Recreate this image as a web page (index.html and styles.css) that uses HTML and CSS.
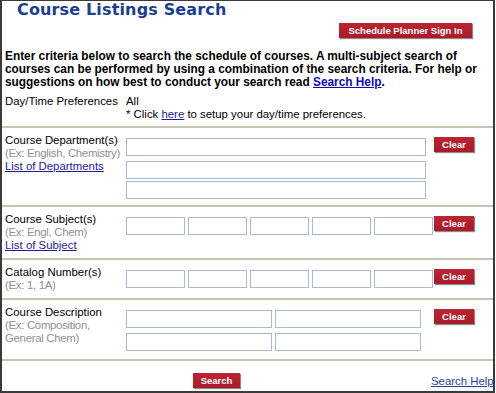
FILE: index.html
```html
<!DOCTYPE html>
<html>
<head>
<meta charset="utf-8">
<title>Course Listings Search</title>
<link rel="stylesheet" href="styles.css">
</head>
<body>
<div class="frame">
  <header class="top">
    <h1 class="title">Course Listings Search</h1>
    <div class="signin-row"><button class="btn btn-signin" type="button">Schedule Planner Sign In</button></div>
    <p class="intro">Enter criteria below to search the schedule of courses. A multi-subject search of courses can be performed by using a combination of the search criteria. For help or suggestions on how best to conduct your search read <a href="#">Search Help</a>.</p>
    <div class="prefs">
      <div class="label-main">Day/Time Preferences</div>
      <div>All<br>* Click <a class="link" href="#">here</a> to setup your day/time preferences.</div>
    </div>
  </header>

  <section class="section">
    <div class="labels">
      <div class="label-main">Course Department(s)</div>
      <div class="label-ex">(Ex: English, Chemistry)</div>
      <a class="link" href="#">List of Departments</a>
    </div>
    <div class="field-stack">
      <input class="input input-wide input-first" type="text">
      <input class="input input-wide" type="text">
      <input class="input input-wide" type="text">
    </div>
    <div class="clear-cell"><button class="btn btn-clear" type="button">Clear</button></div>
  </section>

  <section class="section">
    <div class="labels">
      <div class="label-main">Course Subject(s)</div>
      <div class="label-ex">(Ex: Engl, Chem)</div>
      <a class="link" href="#">List of Subject</a>
    </div>
    <div class="field-row">
      <input class="input input-sm" type="text">
      <input class="input input-sm" type="text">
      <input class="input input-sm" type="text">
      <input class="input input-sm" type="text">
      <input class="input input-sm" type="text">
    </div>
    <div class="clear-cell"><button class="btn btn-clear" type="button">Clear</button></div>
  </section>

  <section class="section">
    <div class="labels">
      <div class="label-main">Catalog Number(s)</div>
      <div class="label-ex">(Ex: 1, 1A)</div>
    </div>
    <div class="field-row">
      <input class="input input-sm" type="text">
      <input class="input input-sm" type="text">
      <input class="input input-sm" type="text">
      <input class="input input-sm" type="text">
      <input class="input input-sm" type="text">
    </div>
    <div class="clear-cell"><button class="btn btn-clear" type="button">Clear</button></div>
  </section>

  <section class="section section-desc">
    <div class="labels">
      <div class="label-main">Course Description</div>
      <div class="label-ex">(Ex: Composition,<br>General Chem)</div>
    </div>
    <div class="field-grid">
      <input class="input" type="text">
      <input class="input" type="text">
      <input class="input" type="text">
      <input class="input" type="text">
    </div>
    <div class="clear-cell"><button class="btn btn-clear" type="button">Clear</button></div>
  </section>

  <footer class="footer-row">
    <button class="btn btn-search" type="button">Search</button>
    <a class="help" href="#">Search Help</a>
  </footer>
</div>
</body>
</html>
```

FILE: styles.css
```css
html, body {
  margin: 0;
  padding: 0;
  background: #ffffff;
}

body {
  font-family: "Liberation Sans", Arial, sans-serif;
  font-size: 11.4px;
  line-height: 13px;
  color: #000000;
}

.frame {
  width: 495px;
  height: 393px;
  box-sizing: border-box;
  border-top: 1px solid #3a3a3a;
  border-left: 2px solid #3a3a3a;
  border-right: 2px solid #3a3a3a;
  border-bottom: 2px solid #3a3a3a;
  overflow: hidden;
}

.title {
  margin: 0;
  padding-left: 15px;
  font-family: "DejaVu Sans", Verdana, sans-serif;
  font-weight: bold;
  font-size: 16px;
  line-height: 18px;
  letter-spacing: 0.15px;
  color: #1b3e94;
}

.signin-row {
  display: flex;
  justify-content: flex-end;
  padding-right: 21px;
  margin-top: 4px;
}

.btn {
  appearance: none;
  -webkit-appearance: none;
  border: 0;
  margin: 0;
  padding: 0;
  height: 15px;
  background: linear-gradient(#bb2531, #a81b27);
  color: #ffffff;
  font-family: "Liberation Sans", Arial, sans-serif;
  font-weight: bold;
  font-size: 9.5px;
  line-height: 15px;
  text-align: center;
  box-shadow: 1px 1px 1px rgba(0, 0, 0, 0.45);
  display: block;
}

.btn-signin {
  width: 133px;
}

.intro {
  margin: 12px 0 0;
  padding: 0 3px;
  font-weight: bold;
  font-size: 11.85px;
  line-height: 13px;
}

.intro a {
  color: #0b0bbd;
  text-decoration: underline;
}

.link {
  color: #1c1c9c;
  text-decoration: underline;
}

.prefs {
  display: grid;
  grid-template-columns: 121px 1fr;
  padding: 6px 0 5px 3px;
}

.section {
  display: grid;
  grid-template-columns: 121px 308px 1fr;
  align-items: start;
  border-top: 2px solid #c9c4b4;
  padding: 6px 0 6px 3px;
}

.section-desc {
  padding-bottom: 8px;
}

.labels {
  display: flex;
  flex-direction: column;
  white-space: nowrap;
}

.labels .link {
  align-self: flex-start;
}

.label-ex {
  color: #8f8f8f;
  letter-spacing: -0.3px;
}

.input {
  display: block;
  box-sizing: border-box;
  height: 18px;
  margin: 0;
  padding: 0;
  border: 1px solid #a8bbd2;
  background: #ffffff;
  min-width: 0;
}

.field-stack {
  display: flex;
  flex-direction: column;
  gap: 2px;
  margin-top: 4px;
}

.input-wide {
  width: 300px;
}

.input-first {
  margin-bottom: 3px;
}

.field-row {
  display: flex;
  gap: 3px;
  margin-top: 4px;
}

.input-sm {
  width: 59px;
}

.field-grid {
  display: grid;
  grid-template-columns: 146px 146px;
  gap: 5px 3px;
  margin-top: 4px;
}

.clear-cell {
  padding-top: 3px;
}

.btn-clear {
  width: 40px;
}

.footer-row {
  display: grid;
  grid-template-columns: 429px 1fr;
  border-top: 2px solid #c9c4b4;
  padding-top: 12px;
}

.btn-search {
  width: 47px;
  justify-self: center;
}

.help {
  justify-self: end;
  align-self: end;
  color: #2c3ea6;
  text-decoration: underline;
  white-space: nowrap;
}
```
